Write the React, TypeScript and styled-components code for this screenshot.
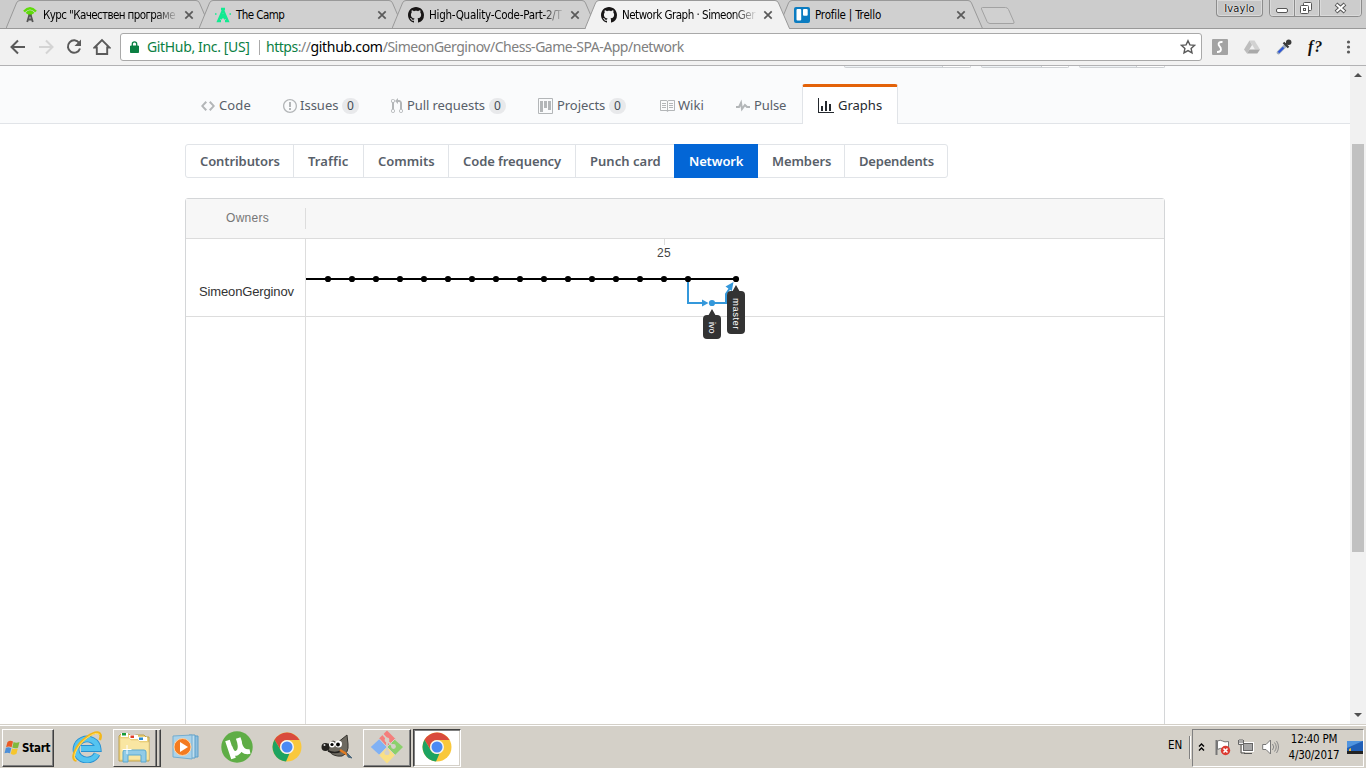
import React from 'react';
import styled, { createGlobalStyle, css } from 'styled-components';

const Global = createGlobalStyle`
  * { box-sizing: border-box; }
  body { margin: 0; overflow: hidden; background: #fff; }
  svg { display: block; flex: none; }
`;

const tahoma = '"DejaVu Sans Condensed", "DejaVu Sans", sans-serif';
const segoe = '"Noto Sans", "Open Sans", sans-serif';
const arial = '"Liberation Sans", Arial, sans-serif';

const Screen = styled.div`
  width: 1366px;
  height: 768px;
  display: flex;
  flex-direction: column;
  overflow: hidden;
  font-family: ${segoe};
`;

/* ---------- Browser tab strip ---------- */
const TabStrip = styled.div`
  position: relative;
  height: 29px;
  flex: none;
  display: flex;
  padding-left: 6px;
  background: #ccc;
  box-shadow: inset 0 -1px #999;
`;
const TabBox = styled.div<{ $active?: boolean }>`
  position: relative;
  z-index: ${p => (p.$active ? 2 : 1)};
  width: 193px;
  height: 29px;
  flex: none;
  display: flex;
  align-items: center;
  padding-left: 16px;
`;
const TabShape = styled.svg`
  position: absolute;
  left: 0;
  top: 0;
`;
const TabIcon = styled.div`
  position: relative;
  width: 16px;
  height: 16px;
  margin-right: 5px;
`;
const TabTitle = styled.div<{ $fade?: boolean; $spacing: number }>`
  position: relative;
  width: 136px;
  height: 18px;
  margin-right: 5px;
  white-space: nowrap;
  font: 11.5px/18px ${tahoma};
  letter-spacing: ${p => p.$spacing}px;
  color: #000;
  ${p => p.$fade && css`mask-image: linear-gradient(90deg, #000 112px, transparent 136px);`}
`;
const CloseIcon = styled.svg`
  position: relative;
`;
const NewTab = styled.svg`
  margin: 6px 0 0 9px;
`;
const WindowButtons = styled.div`
  margin-left: auto;
  display: flex;
  padding-right: 4px;
`;
const ProfileButton = styled.div`
  width: 47px;
  height: 17px;
  margin-right: 6px;
  border: 1px solid #8c8c8c;
  border-top: 0;
  border-radius: 0 0 4px 4px;
  background: #c6c6c6;
  box-shadow: inset 0 0 0 1px #dadada;
  font: 11px/18px ${tahoma};
  letter-spacing: 0.2px;
  text-align: center;
  color: #111;
  text-shadow: 0 0 2px #fff, 0 0 1px #fff;
`;

/* ---------- Browser toolbar ---------- */
const Toolbar = styled.div`
  height: 37px;
  flex: none;
  display: flex;
  align-items: center;
  background: #f2f2f2;
  border-bottom: 1px solid #b2b2b4;
  padding: 0 0 0 9px;
`;
const NavButtons = styled.div`
  width: 111px;
  flex: none;
  display: flex;
  gap: 10px;
`;
const AddressBar = styled.div`
  width: 1082px;
  flex: none;
  height: 28px;
  display: flex;
  align-items: center;
  padding: 0 5px 0 9px;
  background: #fff;
  border: 1px solid #a9a9a9;
  border-radius: 3px;
  font-size: 14px;
  line-height: 26px;
  white-space: nowrap;
`;
const Certificate = styled.span`
  width: 112px;
  margin-left: 8px;
  color: #0b8043;
  letter-spacing: -0.35px;
`;
const AddressRule = styled.i`
  width: 1px;
  height: 15px;
  margin-right: 6px;
  background: #aaa;
`;
const Url = styled.span`
  flex: 1;
  color: #808080;
  letter-spacing: -0.48px;
`;
const Secure = styled.span`color: #0b8043;`;
const Host = styled.span`
  color: #000;
  letter-spacing: -0.3px;
`;
const Extensions = styled.div`
  flex: 1;
  display: flex;
  gap: 16px;
  align-items: center;
  padding-left: 10px;
`;
const FontFinder = styled.span`
  width: 17px;
  font: italic bold 16px/18px "Liberation Serif", serif;
  letter-spacing: 1px;
  color: #111;
`;

/* ---------- Page ---------- */
const Viewport = styled.div`
  height: 658px;
  flex: none;
  display: flex;
`;
const Page = styled.main`
  width: 1350px;
  overflow: hidden;
  background: #fff;
`;
const RepoHead = styled.header`
  height: 58px;
  background: #fafbfc;
  border-bottom: 1px solid #e1e4e8;
`;
const Container = styled.div`
  width: 980px;
  margin-left: 185px;
`;
const ActionRow = styled.div`
  height: 18px;
  display: flex;
  justify-content: flex-end;
  align-items: flex-start;
  gap: 10px;
`;
const ActionEdge = styled.div<{ $w: number; $split: number }>`
  width: ${p => p.$w}px;
  height: 2px;
  border: 1px solid #cdd0d3;
  border-top: 0;
  border-radius: 0 0 3px 3px;
  background: linear-gradient(90deg, #eff3f6 ${p => p.$split}px, #cdd0d3 ${p => p.$split}px, #cdd0d3 ${p => p.$split + 1}px, #fff ${p => p.$split + 1}px);
`;
const RepoNav = styled.nav`display: flex;`;
const RepoTab = styled.a<{ $w: number; $selected?: boolean }>`
  width: ${p => p.$w}px;
  height: 40px;
  display: flex;
  align-items: center;
  padding-left: 16px;
  padding-top: 3px;
  font-size: 13px;
  line-height: 18px;
  white-space: nowrap;
  color: #586069;
  ${p => p.$selected && css`
    padding-top: 0;
    padding-left: 15px;
    color: #24292e;
    background: #fff;
    border: 1px solid #e1e4e8;
    border-top: 3px solid #e36209;
    border-bottom: 0;
    border-radius: 3px 3px 0 0;
  `}
`;
const RepoIcon = styled.svg<{ $on?: boolean; $gap: number }>`
  margin-top: 1px;
  margin-right: ${p => p.$gap}px;
  fill: ${p => (p.$on ? '#24292e' : '#b3b6b8')};
`;
const RepoLabel = styled.span<{ $w: number; $ls: number }>`
  width: ${p => p.$w}px;
  margin-bottom: 2px;
  letter-spacing: ${p => p.$ls}px;
`;
const Counter = styled.span`
  width: 17px;
  height: 16px;
  margin-left: 4px;
  border-radius: 9px;
  background: #e8e9eb;
  color: #444d56;
  font-size: 12px;
  line-height: 16px;
  text-align: center;
`;
const SubNav = styled.nav`
  display: flex;
  width: 763px;
  height: 34px;
  margin-top: 20px;
  border: 1px solid #e1e4e8;
  border-radius: 3px;
`;
const SubTab = styled.a<{ $w: number; $selected?: boolean; $rule?: boolean; $ls: number }>`
  width: ${p => p.$w}px;
  flex: none;
  padding-left: 14px;
  font-size: 13px;
  font-weight: 600;
  line-height: 32px;
  letter-spacing: ${p => p.$ls}px;
  white-space: nowrap;
  color: #586069;
  border-right: ${p => (p.$rule ? '1px solid #e1e4e8' : '0')};
  ${p => p.$selected && css`
    height: 34px;
    margin-top: -1px;
    padding-left: 15px;
    line-height: 34px;
    color: #fff;
    background: #0366d6;
  `}
`;
const Network = styled.section`
  height: 560px;
  margin-top: 20px;
  border: 1px solid #d4d6d8;
  border-radius: 3px;
  font-family: ${arial};
`;
const NetworkHead = styled.div`
  height: 40px;
  display: flex;
  align-items: center;
  background: #f7f7f7;
  border-bottom: 1px solid #dcdcdc;
`;
const OwnersTitle = styled.div`
  width: 120px;
  height: 21px;
  padding-left: 4px;
  border-right: 1px solid #ddd;
  text-align: center;
  font-size: 12px;
  line-height: 20px;
  letter-spacing: 0.25px;
  color: #767676;
`;
const NetworkBody = styled.div`display: flex;`;
const Owners = styled.div`
  width: 120px;
  height: 520px;
  border-right: 1px solid #ddd;
`;
const Owner = styled.div`
  height: 78px;
  padding-top: 44px;
  padding-left: 13px;
  border-bottom: 1px solid #ddd;
  font-size: 13px;
  line-height: 18px;
  letter-spacing: -0.14px;
  color: #333;
`;

const ScrollTrack = styled.div`
  width: 16px;
  display: flex;
  flex-direction: column;
  align-items: center;
  background: #f1f1f1;
`;
const ScrollThumb = styled.div`
  width: 12px;
  height: 408px;
  margin: 67px 0 auto;
  background: #c1c1c1;
`;

/* ---------- Taskbar ---------- */
const Taskbar = styled.footer`
  height: 44px;
  flex: none;
  display: flex;
  align-items: center;
  padding: 3px 2px 1px;
  background: #d4d0c8;
  border-top: 1px solid #d4d0c8;
  box-shadow: inset 0 1px #fff;
  font-family: ${tahoma};
`;
const raised = css`
  border: 1px solid;
  border-color: #fff #404040 #404040 #fff;
  box-shadow: inset -1px -1px #808080;
`;
const StartButton = styled.div`
  ${raised}
  width: 52px;
  height: 38px;
  display: flex;
  align-items: center;
  gap: 1px;
  padding-left: 1px;
  font-weight: bold;
  font-size: 11.5px;
  letter-spacing: -0.25px;
  color: #000;
`;
const TaskList = styled.div`
  flex: 1;
  display: flex;
  align-items: center;
  padding-left: 9px;
`;
const Task = styled.div<{ $kind?: 'raised' | 'stack' | 'pressed' }>`
  width: 48px;
  height: 38px;
  margin-right: 2px;
  display: flex;
  align-items: center;
  justify-content: center;
  padding-bottom: 1px;
  ${p => p.$kind === 'raised' && raised}
  ${p => p.$kind === 'stack' && css`
    border: 1px solid;
    border-color: #fff #404040 #404040 #fff;
    padding-right: 5px;
    box-shadow: inset -1px 0 #808080, inset -3px 0 #d4d0c8, inset -4px 0 #404040, inset -5px 0 #808080;
  `}
  ${p => p.$kind === 'pressed' && css`
    border: 1px solid;
    border-color: #404040 #fff #fff #404040;
    box-shadow: inset 1px 1px #808080, inset -1px -1px #d4d0c8;
    background: #fff;
  `}
`;
const Language = styled.div`
  width: 22px;
  height: 23px;
  border-right: 1px solid #808080;
  box-shadow: 1px 0 #fff;
  font-size: 11.5px;
  line-height: 18px;
`;
const Tray = styled.div`
  width: 172px;
  height: 38px;
  margin-left: 2px;
  display: flex;
  align-items: center;
  padding-left: 5px;
  padding-bottom: 1px;
  border: 1px solid;
  border-color: #808080 #fff #fff #808080;
`;
const TrayIcons = styled.div`
  display: flex;
  align-items: center;
  gap: 7.5px;
  width: 83px;
`;
const Clock = styled.div`
  width: 66px;
  text-align: center;
  font-size: 11.5px;
  line-height: 16px;
  letter-spacing: -0.25px;
  white-space: nowrap;
`;

const paths = {
  code: 'M9.5 3L8 4.5 11.5 8 8 11.5 9.5 13 14 8 9.5 3zm-5 0L0 8l4.5 5L6 11.5 2.5 8 6 4.5 4.5 3z',
  issue: 'M7 2.3c3.14 0 5.7 2.56 5.7 5.7s-2.56 5.7-5.7 5.7A5.71 5.71 0 0 1 1.3 8c0-3.14 2.56-5.7 5.7-5.7zM7 1C3.14 1 0 4.14 0 8s3.14 7 7 7 7-3.14 7-7-3.14-7-7-7zm1 3H6v5h2V4zm0 6H6v2h2v-2z',
  pull: 'M11 11.28V5c-.03-.78-.34-1.47-.94-2.06C9.46 2.35 8.78 2.03 8 2H7V0L4 3l3 3V4h1c.27.02.48.11.69.31.21.2.3.42.31.69v6.28A1.993 1.993 0 0 0 10 15a1.993 1.993 0 0 0 1-3.72zm-1 2.92c-.66 0-1.2-.55-1.2-1.2 0-.65.55-1.2 1.2-1.2.65 0 1.2.55 1.2 1.2 0 .65-.55 1.2-1.2 1.2zM4 3c0-1.11-.89-2-2-2a1.993 1.993 0 0 0-1 3.72v6.56A1.993 1.993 0 0 0 2 15a1.993 1.993 0 0 0 1-3.72V4.72c.59-.34 1-.98 1-1.72zm-.8 10c0 .66-.55 1.2-1.2 1.2-.65 0-1.2-.55-1.2-1.2 0-.65.55-1.2 1.2-1.2.65 0 1.2.55 1.2 1.2zM2 4.2C1.34 4.2.8 3.65.8 3c0-.65.55-1.2 1.2-1.2.65 0 1.2.55 1.2 1.2 0 .65-.55 1.2-1.2 1.2z',
  project: 'M10 12h3V3h-3zM6 10h3V3H6zM2 14h3V3H2zM1 15h13V1H1zM14 0H1a1 1 0 0 0-1 1v14a1 1 0 0 0 1 1h13a1 1 0 0 0 1-1V1a1 1 0 0 0-1-1z',
  book: 'M3 5h4v1H3V5zm0 3h4V7H3v1zm0 2h4V9H3v1zm11-5h-4v1h4V5zm0 2h-4v1h4V7zm0 2h-4v1h4V9zm2-6v9c0 .55-.45 1-1 1H9.5l-1 1-1-1H2c-.55 0-1-.45-1-1V3c0-.55.45-1 1-1h5.5l1 1 1-1H15c.55 0 1 .45 1 1zm-8 .5L7.500 3H2v9h6V3.500zm7-.5H9.500l-.5.5V12h6V3z',
  pulse: 'M11.5 8L8.8 5.4 6.6 8.5 5.5 1.6 2.38 8H0v2h3.6l.9-1.8.9 5.4L9 8.5l1.6 1.5H14V8h-2.5z',
  graph: 'M16 14v1H0V0h1v14h15zM5 13H3V8h2v5zm4 0H7V3h2v10zm4 0h-2V6h2v7z',
  mark: 'M8 0C3.58 0 0 3.58 0 8c0 3.54 2.29 6.53 5.47 7.59.4.07.55-.17.55-.38 0-.19-.01-.82-.01-1.49-2.01.37-2.53-.49-2.69-.94-.09-.23-.48-.94-.82-1.13-.28-.15-.68-.52-.01-.53.63-.01 1.08.58 1.23.82.72 1.21 1.87.87 2.33.66.07-.52.28-.87.51-1.07-1.78-.2-3.64-.89-3.64-3.95 0-.87.31-1.59.82-2.15-.08-.2-.36-1.02.08-2.12 0 0 .67-.21 2.2.82.64-.18 1.32-.27 2-.27.68 0 1.36.09 2 .27 1.53-1.04 2.2-.82 2.2-.82.44 1.1.16 1.92.08 2.12.51.56.82 1.27.82 2.15 0 3.07-1.87 3.75-3.65 3.95.29.25.54.73.54 1.48 0 1.07-.01 1.93-.01 2.2 0 .21.15.46.55.38A8.013 8.013 0 0 0 16 8c0-4.42-3.58-8-8-8z',
};

const GithubMark = () => <svg width="16" height="16" viewBox="0 0 16 16"><path d={paths.mark} fill="#181616" /></svg>;

const AcademyIcon = () => (
  <svg width="16" height="16" viewBox="0 0 16 16" fill="none">
    <path d="M2 4.500Q8-2 14 4.500M4.500 6.500Q8 2.500 11.500 6.500" stroke="#5fdc0a" strokeWidth="2.300" />
    <path d="M8 5v3.500" stroke="#5fdc0a" strokeWidth="4" />
    <path d="M5.200 15L7.200 8.500h1.600l2 6.500M6 12.500h4" stroke="#555" strokeWidth="1.800" />
  </svg>
);
const CampIcon = () => (
  <svg width="16" height="16" viewBox="0 0 16 16" fill="none">
    <path d="M6 2h4M8 2v3M8 3L3.200 14H6M8 3l4.800 11H10M5.700 12L8 8.500l2.300 3.500" stroke="#12ea91" strokeWidth="2.300" />
    <path d="M0 7h1.500M14.500 7H16" stroke="#12ea91" strokeWidth="1.500" />
  </svg>
);
const TrelloIcon = () => (
  <svg width="16" height="16" viewBox="0 0 16 16">
    <rect width="16" height="16" rx="2" fill="#0b7cc1" />
    <rect x="2.500" y="2" width="4.700" height="11.500" rx="1" fill="#fff" />
    <rect x="9" y="2" width="4.700" height="6.800" rx="1" fill="#fff" />
  </svg>
);

const tabs = [
  { title: 'Курс "Качествен програме', icon: <AcademyIcon />, fade: true, ls: -0.6 },
  { title: 'The Camp', icon: <CampIcon />, ls: -0.55 },
  { title: 'High-Quality-Code-Part-2/T', icon: <GithubMark />, fade: true, ls: -0.25 },
  { title: 'Network Graph · SimeonGer', icon: <GithubMark />, fade: true, active: true, ls: -0.5 },
  { title: 'Profile | Trello', icon: <TrelloIcon />, ls: -0.2 },
];

const repoTabs = [
  { label: 'Code', icon: paths.code, iw: 14, gap: 4, w: 82, lw: 32, ls: 0.1 },
  { label: 'Issues', icon: paths.issue, iw: 14, gap: 3, w: 108, lw: 38, ls: 0, count: true },
  { label: 'Pull requests', icon: paths.pull, iw: 12, gap: 4, w: 147, lw: 78, ls: -0.08, count: true },
  { label: 'Projects', icon: paths.project, iw: 15, gap: 4, w: 121, lw: 48, ls: -0.05, count: true },
  { label: 'Wiki', icon: paths.book, iw: 16, gap: 3, w: 77, lw: 26, ls: 0 },
  { label: 'Pulse', icon: paths.pulse, iw: 14, gap: 4, w: 82, lw: 33, ls: -0.1 },
  { label: 'Graphs', icon: paths.graph, iw: 16, gap: 4, w: 96, lw: 45, ls: 0, on: true },
];

const subTabs = [
  { label: 'Contributors', w: 108, rule: true, ls: -0.1 },
  { label: 'Traffic', w: 70, rule: true, ls: 0.1 },
  { label: 'Commits', w: 85, rule: true, ls: 0 },
  { label: 'Code frequency', w: 127, rule: true, ls: -0.08 },
  { label: 'Punch card', w: 98, ls: 0.03 },
  { label: 'Network', w: 84, on: true, ls: -0.15 },
  { label: 'Members', w: 87, rule: true, ls: -0.1 },
  { label: 'Dependents', w: 102, ls: -0.2 },
];

const commits = Array.from({ length: 16 }, (_, i) => 22 + i * 24).concat(430);

const NetworkGraph = () => (
  <svg width="858" height="520" viewBox="0 0 858 520">
    <path d="M0 77.500h858M358.500 0v6" stroke="#ddd" fill="none" />
    <text x="358" y="18" textAnchor="middle" fontFamily={arial} fontSize="12" letterSpacing="0.400" fill="#444">25</text>
    <g stroke="#3498db" strokeWidth="2" fill="none">
      <path d="M382 40v24h16M409 64h11v-9l4-6" />
    </g>
    <path d="M396 60.500v7l6.500-3.500zM427.500 43l-8 4.500 6.300 4.500z" fill="#3498db" />
    <circle cx="406" cy="64" r="3.100" fill="#3498db" />
    <path d="M0 40h430" stroke="#000" strokeWidth="2" />
    {commits.map(x => <circle key={x} cx={x} cy="40" r="3.100" />)}
    <g fill="#333">
      <path d="M406 70l4 7h-8zM430 46l4 7h-8z" />
      <rect x="397" y="76" width="18" height="24" rx="4" />
      <rect x="421" y="52" width="18" height="43" rx="4" />
    </g>
    <g fill="#fff" fontFamily={arial}>
      <text transform="translate(403 83) rotate(90)" fontSize="9">ivo</text>
      <text transform="translate(427 59) rotate(90)" fontSize="9.500" letterSpacing="0.500">master</text>
    </g>
  </svg>
);

const Chrome = () => (
  <svg width="30" height="30" viewBox="0 0 30 30">
    <circle cx="15" cy="15" r="14.500" fill="#f9c83c" />
    <path d="M2.500 7.700A14.500 14.500 0 0 1 27.600 8H15a7 7 0 0 0-6.300 10z" fill="#d94b3d" />
    <path d="M2.500 7.700L8.900 18.500a7 7 0 0 0 8.600 3L14 29.500A14.500 14.500 0 0 1 2.500 7.700z" fill="#1da361" />
    <circle cx="15" cy="15" r="7" fill="#f5f5f5" />
    <circle cx="15" cy="15" r="5.500" fill="#4a8af4" />
  </svg>
);
const WindowsFlag = () => (
  <svg width="17" height="16" viewBox="0 0 17 16">
    <path d="M3.500 2Q6 0 9 1.500L7.600 7.200Q5 5.700 2.100 7z" fill="#ea5a25" />
    <path d="M9.600 2Q12 3.500 15.500 2L14 7.700Q11 9 8.300 7.500z" fill="#80b93c" />
    <path d="M1.900 7.700Q4.500 6.500 7.300 8L6 13.300Q3.500 12 .5 13.300z" fill="#4d8fd8" />
    <path d="M8.100 8.400Q11 9.800 13.800 8.400L12.500 13.800Q9.500 15.500 6.700 13.800z" fill="#f6c62d" />
  </svg>
);
const InternetExplorer = () => (
  <svg width="32" height="32" viewBox="0 0 32 32" fill="none">
    <path d="M26 23A11 10.500 0 1 1 27 17.500H10" stroke="#2990d0" strokeWidth="6.800" />
    <path d="M26 23A11 10.500 0 1 1 27 17.500H10" stroke="#55c4f0" strokeWidth="5" />
    <path d="M5.500 29.500C-1 29 4 16 13 8.500S28-.5 29.500 4q.5 2-.7 5" stroke="#f3b719" strokeWidth="2.600" />
    <path d="M5 29C1 26 6 15 14 8.500S27 1 28.500 4" stroke="#ffe36a" strokeWidth="1" />
  </svg>
);
const Explorer = () => (
  <svg width="33" height="32" viewBox="0 0 33 32">
    <path d="M1 5l2-2h8l2 2h3l2-1h8l2 2h3v24H1z" fill="#efd57c" stroke="#bda04b" />
    <path d="M3 2h7v4H3zM11 4h9v4h-9zM20 6h9v4h-9z" fill="#fff" />
    <path d="M4 2h4v2.500H4z" fill="#159b38" /><path d="M12.500 4.500h3.500V7h-3.500z" fill="#e13d27" /><path d="M21 6.500h4V9h-4z" fill="#268bd2" />
    <path d="M2 7h9l2 2h7l2 2h9v18H2z" fill="#f9e6a2" stroke="#e2c777" strokeWidth=".6" />
    <path d="M5 31V21q0-2 2-2h19q2 0 2 2v10h-5v-7H10v7z" fill="#91cbe7" stroke="#5aa9d1" />
    <path d="M9 14v9M4.500 18.500h9" stroke="#fff" strokeWidth="1" />
  </svg>
);
const MediaPlayer = () => (
  <svg width="30" height="30" viewBox="0 0 30 30">
    <path d="M19 4h7v21h-7z" fill="#8fbfdf" stroke="#5d9fc9" />
    <path d="M17 3h6v23h-6z" fill="#c0deee" stroke="#5d9fc9" />
    <path d="M1 4l19-1v24L1 25z" fill="#a9d2ea" stroke="#74add0" />
    <circle cx="10.500" cy="15" r="8.500" fill="#f47b20" stroke="#ffd4a5" />
    <path d="M8 10l8 5-8 5z" fill="#fff" />
  </svg>
);
const Torrent = () => (
  <svg width="32" height="32" viewBox="0 0 32 32">
    <circle cx="16" cy="16" r="15.700" fill="#5fad46" />
    <path d="M6.500 9.500l6 18M9 16q2.500 8 7 6T18.500 11l-1.300-4M19 14q2.500 8 10 6.500" fill="none" stroke="#fff" strokeWidth="4.800" />
  </svg>
);
const Gimp = () => (
  <svg width="32" height="26" viewBox="0 0 32 26">
    <path d="M5 12Q10 8 12 7L16 9l10-8 1 9q1 9-6 12Q12 23 8 17z" fill="#6d6960" stroke="#35332e" />
    <circle cx="4.500" cy="13" r="4" fill="#24221f" /><circle cx="3.500" cy="11" r="1" fill="#ddd" />
    <circle cx="11" cy="10.500" r="3" fill="#fff" /><circle cx="17.500" cy="10" r="3.500" fill="#fff" />
    <circle cx="11" cy="10.500" r="1.600" /><circle cx="17" cy="10.500" r="1.900" />
    <path d="M7 17q7 3 13 0" stroke="#24221f" strokeWidth="1.500" fill="none" />
    <path d="M19 16l8 5" stroke="#e17b21" strokeWidth="2.500" /><path d="M26 19l5 5-4-1z" fill="#4b667a" stroke="#4b667a" />
  </svg>
);
const Git = () => (
  <svg width="34" height="34" viewBox="0 0 34 34">
    <path d="M17 .5l8.500 8.500L17 17 9 8.500z" fill="#f47f7c" />
    <path d="M9.500 9l7.500 8-7.500 8L.8 17z" fill="#80b1f4" />
    <path d="M24.500 9.500L33 17l-8 8-8-8z" fill="#8bd06c" />
    <path d="M17 17l8 8-8 8.500L9 25z" fill="#fae083" />
    <path d="M12.500 4L17 9v13M17 11l6 5" fill="none" stroke="#d4d0c8" strokeWidth="1.800" />
    <path d="M9 8.500l8 8.500 8-8M9 25.500l8-8.500 8 8" fill="none" stroke="#d4d0c8" strokeWidth="1" />
    <g fill="#d4d0c8"><circle cx="17" cy="10" r="2.400" /><circle cx="23.500" cy="16.500" r="2.400" /><circle cx="17" cy="22.500" r="2.600" /></g>
  </svg>
);

export default function App() {
  return (
    <Screen>
      <Global />
      <TabStrip>
        {tabs.map(t => (
          <TabBox key={t.title} $active={t.active}>
            <TabShape width="207" height="29" viewBox="0 0 207 29">
              <path d="M0 28.500L10.500 3Q11.500.5 14 .5h176q2.500 0 3.500 2.500L204.500 28.500z" fill={t.active ? '#f2f2f2' : '#d0d0d0'} />
              <path d="M0 28.500L10.500 3Q11.500.5 14 .5h176q2.500 0 3.500 2.500L204.500 28.500" fill="none" stroke="#999" />
              {t.active ? <path d="M1 28.500h203" stroke="#f2f2f2" /> : <path d="M0 28.500h205" stroke="#999" />}
            </TabShape>
            <TabIcon>{t.icon}</TabIcon>
            <TabTitle $fade={t.fade} $spacing={t.ls}>{t.title}</TabTitle>
            <CloseIcon width="10" height="10" viewBox="0 0 10 10"><path d="M1.300 1.300l7.400 7.400M8.700 1.300L1.300 8.700" stroke="#5a5a5a" strokeWidth="1.700" /></CloseIcon>
          </TabBox>
        ))}
        <NewTab width="36" height="19" viewBox="0 0 36 19">
          <path d="M2.500 1.500h23q2 0 3 2L34 16q.5 1.500-1 1.500H10q-2 0-3-2L1.500 3q-.5-1.500 1-1.500z" fill="#d0d0d0" stroke="#a2a2a2" />
        </NewTab>
        <WindowButtons>
          <ProfileButton>Ivaylo</ProfileButton>
          <svg width="93" height="17" viewBox="0 0 93 17" fill="none">
            <path d="M.5 0v13q0 3.500 3 3.500h86q3 0 3-3.500V0M25.500 0v16M50.500 0v16" stroke="#8c8c8c" />
            <path d="M1.500 0v13q0 2.500 2 2.500h21V0M26.500 0v15.500h23V0M51.500 0v15.500h38q2 0 2-2.500V0" stroke="#dadada" />
            <rect x="7.500" y="8.500" width="11" height="4" rx="1.500" fill="#fff" stroke="#555" />
            <rect x="34.500" y="2.500" width="8" height="8" rx="1" fill="#fff" stroke="#555" />
            <rect x="31.500" y="5.500" width="8" height="8" rx="1" fill="#fff" stroke="#555" /><rect x="34.500" y="8.500" width="2" height="2" stroke="#555" />
            <path d="M67 4l9 8M76 4l-9 8" stroke="#555" strokeWidth="4" /><path d="M67.500 4.500l8 7M75.500 4.500l-8 7" stroke="#fff" strokeWidth="2" />
          </svg>
        </WindowButtons>
      </TabStrip>

      <Toolbar>
        <NavButtons>
          <svg width="18" height="18" viewBox="0 0 18 18" fill="none" stroke="#5a5a5a" strokeWidth="2"><path d="M16 9H3M9 2.500L2.500 9 9 15.500" /></svg>
          <svg width="18" height="18" viewBox="0 0 18 18" fill="none" stroke="#d4d4d4" strokeWidth="2"><path d="M2 9h13M9 2.500l6.500 6.500L9 15.500" /></svg>
          <svg width="18" height="18" viewBox="0 0 18 18" fill="none"><path d="M14.200 5A6.200 6.200 0 1 0 15 10.500" stroke="#5a5a5a" strokeWidth="2" /><path d="M16 1.500V8H9.500z" fill="#5a5a5a" /></svg>
          <svg width="18" height="18" viewBox="0 0 18 18" fill="none" stroke="#5a5a5a" strokeWidth="1.900"><path d="M1.500 9.500L9 2l7.500 7.500h-2.300V16H3.800V9.500z" /></svg>
        </NavButtons>
        <AddressBar>
          <svg width="9" height="12" viewBox="0 0 9 12"><path d="M.5 5h8v6.500h-8z" fill="#0b8043" stroke="#0b8043" /><path d="M2.300 5V3a2.200 2.200 0 0 1 4.400 0v2" fill="none" stroke="#0b8043" strokeWidth="1.300" /></svg>
          <Certificate>GitHub, Inc. [US]</Certificate>
          <AddressRule />
          <Url><Secure>https</Secure>://<Host>github.com</Host>/SimeonGerginov/Chess-Game-SPA-App/network</Url>
          <svg width="16" height="16" viewBox="0 0 16 16"><path d="M8 1.700l1.900 4.200 4.500.5-3.300 3 .9 4.500-4-2.300-4 2.300.9-4.500-3.300-3 4.500-.5z" fill="none" stroke="#5a5a5a" strokeWidth="1.400" /></svg>
        </AddressBar>
        <Extensions>
          <svg width="16" height="16" viewBox="0 0 16 16"><rect width="16" height="16" rx="1" fill="#a3a3a3" /><path d="M10.500 3Q6 2.500 6.700 6l2 3Q10 13 5 13" fill="none" stroke="#fff" strokeWidth="1.900" /></svg>
          <svg width="16" height="16" viewBox="0 0 16 16"><path d="M5.500 1.500h5l5.500 9h-5z" fill="#d2d2d2" /><path d="M5.500 1.500L8 6l-5 8.500L0 10.500z" fill="#bdbdbd" /><path d="M5.500 10.500H16l-2.700 4H3z" fill="#a9a9a9" /></svg>
          <svg width="16" height="16" viewBox="0 0 16 16"><path d="M2.500 13.500l7-7" stroke="#9aa9ba" strokeWidth="3.600" strokeLinecap="round" /><path d="M2.500 13.500l5-5" stroke="#2c55d9" strokeWidth="2.200" /><path d="M7.500 3.500l5 5M10 5.500l3-3" stroke="#3b3b3b" strokeWidth="2.300" /><circle cx="12.700" cy="3.200" r="2.700" fill="#3b3b3b" /></svg>
          <FontFinder>f?</FontFinder>
          <svg width="18" height="16" viewBox="0 0 18 16" fill="#5a5a5a"><circle cx="7.500" cy="3" r="1.600" /><circle cx="7.500" cy="8" r="1.600" /><circle cx="7.500" cy="13" r="1.600" /></svg>
        </Extensions>
      </Toolbar>

      <Viewport>
        <Page>
          <RepoHead>
            <Container>
              <ActionRow>
                <ActionEdge $w={127} $split={97} />
                <ActionEdge $w={88} $split={59} />
                <ActionEdge $w={86} $split={56} />
              </ActionRow>
              <RepoNav>
                {repoTabs.map(t => (
                  <RepoTab key={t.label} $w={t.w} $selected={t.on}>
                    <RepoIcon $on={t.on} $gap={t.gap} width={t.iw} height="16" viewBox={`0 0 ${t.iw} 16`}><path d={t.icon} fillRule="evenodd" /></RepoIcon>
                    <RepoLabel $w={t.lw} $ls={t.ls}>{t.label}</RepoLabel>
                    {t.count && <Counter>0</Counter>}
                  </RepoTab>
                ))}
              </RepoNav>
            </Container>
          </RepoHead>
          <Container>
            <SubNav>
              {subTabs.map(t => <SubTab key={t.label} $w={t.w} $selected={t.on} $rule={t.rule} $ls={t.ls}>{t.label}</SubTab>)}
            </SubNav>
            <Network>
              <NetworkHead><OwnersTitle>Owners</OwnersTitle></NetworkHead>
              <NetworkBody>
                <Owners><Owner>SimeonGerginov</Owner></Owners>
                <NetworkGraph />
              </NetworkBody>
            </Network>
          </Container>
        </Page>
        <ScrollTrack>
          <svg width="16" height="11" viewBox="0 0 16 11"><path d="M4 11l4-4 4 4z" fill="#505050" /></svg>
          <ScrollThumb />
          <svg width="16" height="11" viewBox="0 0 16 11"><path d="M4 0h8L8 4z" fill="#505050" /></svg>
        </ScrollTrack>
      </Viewport>

      <Taskbar>
        <StartButton><WindowsFlag />Start</StartButton>
        <TaskList>
          <Task><InternetExplorer /></Task>
          <Task $kind="stack"><Explorer /></Task>
          <Task><MediaPlayer /></Task>
          <Task><Torrent /></Task>
          <Task><Chrome /></Task>
          <Task><Gimp /></Task>
          <Task $kind="raised"><Git /></Task>
          <Task $kind="pressed"><Chrome /></Task>
        </TaskList>
        <Language>EN</Language>
        <Tray>
          <TrayIcons>
            <svg width="8" height="10" viewBox="0 0 8 10" fill="none" stroke="#000" strokeWidth="1.400"><path d="M1 4.500l2.500-2.500L6 4.500M1 8.500L3.500 6 6 8.500" /></svg>
            <svg width="17" height="17" viewBox="0 0 17 17"><path d="M2.500 1v15" stroke="#777" strokeWidth="2" /><path d="M3.500 2q3-1.500 5 0t6 .5v8q-3 1-5.500-.5t-5.500.5z" fill="#fff" stroke="#777" /><circle cx="11.500" cy="11.500" r="4.700" fill="#dc3b32" /><path d="M9.500 9.500l4 4M13.500 9.500l-4 4" stroke="#fff" strokeWidth="1.600" /></svg>
            <svg width="16" height="16" viewBox="0 0 16 16"><rect x="4.500" y="3.500" width="11" height="9" fill="#aaa" stroke="#fff" /><rect x="5.500" y="4.500" width="9" height="7" fill="#a6a6a6" stroke="#666" /><path d="M6 14.500h8M3 6v8h4" stroke="#555" fill="none" /><path d="M.5 1v4.500h5V1M2 0v4M4 0v4" stroke="#666" fill="#eee" /></svg>
            <svg width="17" height="16" viewBox="0 0 17 16" fill="none"><path d="M.7 5.500H4L8.500 1v14L4 10.500H.7z" fill="#fff" stroke="#777" /><path d="M10.500 5q2.500 3 0 6M12.500 3.500q3.500 4.500 0 9M14.500 2q4 6 0 12" stroke="#888" /></svg>
          </TrayIcons>
          <Clock>12:40 PM<br />4/30/2017</Clock>
          <svg width="16" height="13" viewBox="0 0 16 13"><rect width="16" height="11" fill="#205fb7" /><path d="M0 0h16L0 7z" fill="#5094df" /><path d="M0 10h16v3H0z" fill="#222" /><path d="M2 8l2-1v3H2z" fill="#f4bd35" /></svg>
        </Tray>
      </Taskbar>
    </Screen>
  );
}
